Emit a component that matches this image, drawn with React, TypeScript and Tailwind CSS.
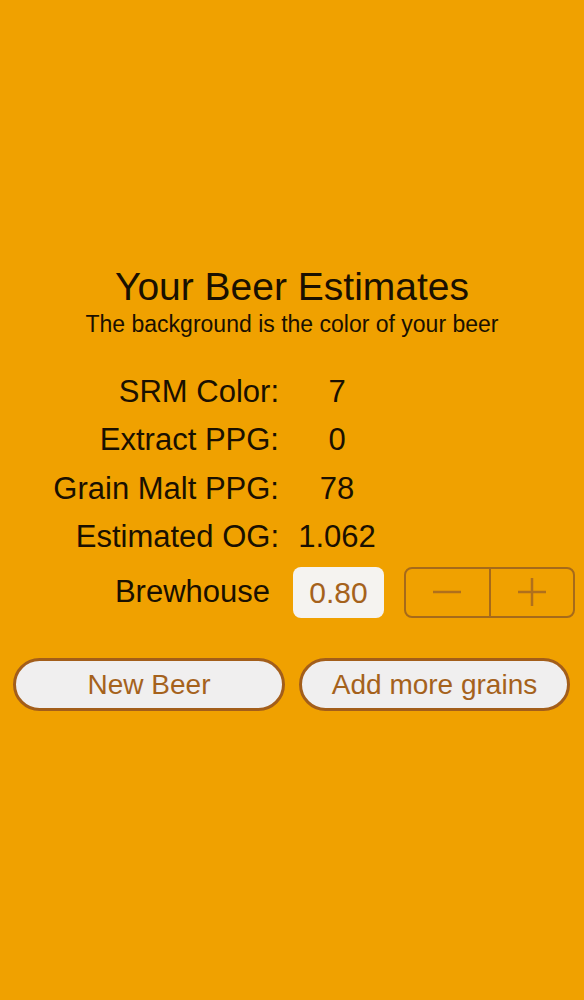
import React from "react";

const rows: [string, string][] = [
  ["SRM Color:", "7"],
  ["Extract PPG:", "0"],
  ["Grain Malt PPG:", "78"],
  ["Estimated OG:", "1.062"],
];

export default function App() {
  return (
    <div
      className="w-[584px] h-[1000px] bg-[#F0A100] text-[#1A1000] flex flex-col"
      style={{ fontFamily: '"Liberation Sans", Arial, sans-serif' }}
    >
      <div className="pt-[265px] text-center text-[39px] leading-[44px]">Your Beer Estimates</div>
      <div className="mt-[1px] text-center text-[23px] leading-[28px]">
        The background is the color of your beer
      </div>
      <div className="mt-[30px] flex flex-col">
        {rows.map(([label, value]) => (
          <div key={label} className="flex text-[31px] leading-[48.3px]">
            <div className="w-[279px] text-right">{label}</div>
            <div className="w-[116px] text-center">{value}</div>
          </div>
        ))}
      </div>
      <div className="mt-[5px] flex items-center h-[52px]">
        <div className="w-[270px] text-right text-[31px] leading-[36px]">Brewhouse</div>
        <div className="ml-[23px] w-[91px] h-[51px] rounded-[8px] bg-[#F5F3F0] text-[#A5621C] text-[30px] flex items-center justify-center">
          0.80
        </div>
        <div className="ml-[20px] w-[171px] h-[51px] rounded-[8px] border-2 border-[#A66A1A] flex">
          <div className="flex-1 flex items-center justify-center border-r-2 border-[#A66A1A]">
            <svg width="30" height="30" viewBox="0 0 30 30">
              <path d="M1 15 H29" stroke="#B0701C" strokeWidth="2.5" />
            </svg>
          </div>
          <div className="flex-1 flex items-center justify-center">
            <svg width="30" height="30" viewBox="0 0 30 30">
              <path d="M1 15 H29 M15 1 V29" stroke="#B0701C" strokeWidth="2.5" />
            </svg>
          </div>
        </div>
      </div>
      <div className="mt-[40px] flex pl-[13px] gap-[14px]">
        <button className="w-[272px] h-[53px] rounded-full bg-[#F0EFEF] border-[3px] border-[#A35E1A] text-[#A5621C] text-[28px] flex items-center justify-center">
          New Beer
        </button>
        <button className="w-[271px] h-[53px] rounded-full bg-[#F0EFEF] border-[3px] border-[#A35E1A] text-[#A5621C] text-[28px] flex items-center justify-center">
          Add more grains
        </button>
      </div>
    </div>
  );
}
